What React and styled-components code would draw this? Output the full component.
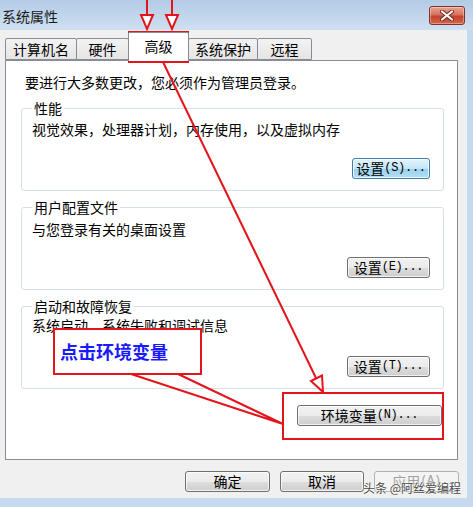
import React from 'react'
import styled, { createGlobalStyle } from 'styled-components'

const Global = createGlobalStyle`
    body {
        margin: 0;
        font-family: "Noto Sans CJK SC", "Noto Sans", sans-serif;
        color: #000;
    }
`

const Window = styled.div`
    position: relative;
    width: 473px;
    height: 507px;
    overflow: hidden;
    display: flex;
    flex-direction: column;
    background: #c6daef;
`
const TitleBar = styled.div`
    height: 30px;
    flex: none;
    display: flex;
    align-items: flex-start;
    justify-content: space-between;
    padding: 0 8px 0 2px;
    background: linear-gradient(#b3cbe5, #cfe0f1);
`
const Title = styled.div`
    font-size: 14px;
    line-height: 32px;
    color: #1a1a1a;
`
const CloseButton = styled.div`
    margin-top: 6px;
    width: 36px;
    height: 19px;
    box-sizing: border-box;
    border: 1px solid #7e3428;
    border-radius: 3px;
    background: linear-gradient(#e9a593 0%, #d9725c 45%, #c5432b 55%, #d2664c 100%);
    display: flex;
    align-items: center;
    justify-content: center;
    box-shadow: inset 0 0 0 1px rgba(255,255,255,0.35);
`
const Frame = styled.div`
    display: flex;
    height: 468px;
    flex: none;
`
const Client = styled.div`
    width: 467px;
    background: #f0f0f0;
    padding-left: 5px;
    box-sizing: border-box;
    display: flex;
    flex-direction: column;
`
const TabStrip = styled.div`
    height: 30px;
    display: flex;
    align-items: flex-end;
    position: relative;
    z-index: 1;
`
const Tab = styled.div`
    width: ${p => p.$w}px;
    height: ${p => p.$active ? 29 : 22}px;
    margin-bottom: ${p => p.$active ? -1 : 0}px;
    box-sizing: border-box;
    border: 1px solid #898c95;
    border-bottom: ${p => p.$active ? 'none' : '1px solid #898c95'};
    border-radius: 2px 2px 0 0;
    margin-right: -1px;
    background: ${p => p.$active ? '#fff' : 'linear-gradient(#f3f3f3, #e5e5e5)'};
    font-size: 14px;
    line-height: ${p => p.$active ? 26 : 20}px;
    text-align: center;
`
const Panel = styled.div`
    width: 453px;
    height: 400px;
    box-sizing: border-box;
    border: 1px solid #898c95;
    background: #fff;
    padding-top: 11px;
    display: flex;
    flex-direction: column;
`
const Intro = styled.div`
    font-size: 14px;
    line-height: 20px;
    padding-left: 19px;
`
const Group = styled.fieldset`
    margin: ${p => p.$top}px 13px 0 15px;
    padding: 0 13px 11px 10px;
    border: 1px solid #d5dfe5;
    border-radius: 3px;
    display: flex;
    flex-direction: column;
    min-inline-size: 0;
`
const Legend = styled.legend`
    font-size: 14px;
    line-height: 20px;
    padding: 0 2px;
    margin-left: 0;
`
const Desc = styled.div`
    font-size: 14px;
    line-height: 20px;
    margin-top: ${p => p.$top}px;
`
const ButtonRow = styled.div`
    display: flex;
    justify-content: flex-end;
    gap: ${p => p.$gap || 0}px;
    margin-top: ${p => p.$top}px;
    padding-right: ${p => p.$right || 0}px;
`
const Button = styled.div`
    width: ${p => p.$w}px;
    height: 21px;
    box-sizing: border-box;
    border: 1px solid ${p => p.$focus ? '#3c7fb1' : p.$disabled ? '#adb2b5' : '#707070'};
    border-radius: 3px;
    background: ${p => p.$focus
        ? 'linear-gradient(#e5f4fc 0%, #c4e5f6 50%, #98d1ef 51%, #b7dff3 100%)'
        : p.$disabled
        ? '#f4f4f4'
        : 'linear-gradient(#f2f2f2 0%, #ebebeb 50%, #dddddd 51%, #cfcfcf 100%)'};
    box-shadow: inset 0 0 0 1px ${p => p.$disabled ? 'transparent' : 'rgba(255,255,255,0.7)'};
    color: ${p => p.$disabled ? '#a0a0a0' : '#000'};
    font-size: 14px;
    line-height: 19px;
    display: flex;
    justify-content: center;
    align-items: center;
    white-space: nowrap;
`
const Accel = styled.span`
    font-family: "Liberation Mono", monospace;
    font-size: 12px;
    letter-spacing: -0.3px;
`
const Footer = styled.div`
    display: flex;
    justify-content: flex-end;
    gap: 10px;
    margin-top: 11px;
    padding-right: 8px;
`
const SideStrip = styled.div`
    flex: 1;
    background: #c6daef;
`
const Overlay = styled.svg`
    position: absolute;
    left: 0;
    top: 0;
    pointer-events: none;
`
const Callout = styled.div`
    position: absolute;
    left: 53px;
    top: 328px;
    width: 149px;
    height: 47px;
    box-sizing: border-box;
    border: 2px solid #e3151b;
    background: #fff;
    color: #1a1aff;
    font-size: 18px;
    font-weight: 700;
    line-height: 43px;
    padding-left: 5px;
`
const Watermark = styled.div`
    position: absolute;
    left: 363px;
    top: 479px;
    font-size: 12px;
    line-height: 18px;
    color: #4a4a4a;
    text-shadow: 0 0 2px #fff, 0 0 2px #fff;
    white-space: nowrap;
`

const tabs = [
    { label: '计算机名', w: 72 },
    { label: '硬件', w: 53 },
    { label: '高级', w: 61, active: true },
    { label: '系统保护', w: 70 },
    { label: '远程', w: 55 },
]

const groups = [
    { legend: '性能', desc: '视觉效果，处理器计划，内存使用，以及虚拟内存', key: 'S', top: 6, descTop: 1, btnTop: 19, focus: true },
    { legend: '用户配置文件', desc: '与您登录有关的桌面设置', key: 'E', top: 6, descTop: 2, btnTop: 18 },
    { legend: '启动和故障恢复', desc: '系统启动、系统失败和调试信息', key: 'T', top: 6, descTop: -1, btnTop: 21 },
]

const App = () => {
  return (
    <Window>
        <Global />
        <TitleBar>
            <Title>系统属性</Title>
            <CloseButton>
                <svg width="14" height="11" viewBox="0 0 14 11">
                    <path d="M2 1.5 L12 9.5 M12 1.5 L2 9.5" stroke="#6b2a20" strokeWidth="4" strokeLinecap="round" />
                    <path d="M2 1.5 L12 9.5 M12 1.5 L2 9.5" stroke="#fff" strokeWidth="2.2" strokeLinecap="round" />
                </svg>
            </CloseButton>
        </TitleBar>
        <Frame>
            <Client>
                <TabStrip>
                    {tabs.map(t => (
                        <Tab key={t.label} $w={t.w} $active={t.active}>{t.label}</Tab>
                    ))}
                </TabStrip>
                <Panel>
                    <Intro>要进行大多数更改，您必须作为管理员登录。</Intro>
                    {groups.map(g => (
                        <Group key={g.legend} $top={g.top}>
                            <Legend>{g.legend}</Legend>
                            <Desc $top={g.descTop}>{g.desc}</Desc>
                            <ButtonRow $top={g.btnTop}>
                                <Button $w={g.focus ? 78 : 83} $focus={g.focus}>
                                    设置<Accel>({g.key})...</Accel>
                                </Button>
                            </ButtonRow>
                        </Group>
                    ))}
                    <ButtonRow $top={16} $right={15}>
                        <Button $w={145}>环境变量<Accel>(N)...</Accel></Button>
                    </ButtonRow>
                </Panel>
                <Footer>
                    <Button $w={85}>确定</Button>
                    <Button $w={84}>取消</Button>
                    <Button $w={85} $disabled>应用<Accel>(A)</Accel></Button>
                </Footer>
            </Client>
            <SideStrip />
        </Frame>

        <Overlay width="473" height="507" viewBox="0 0 473 507">
            <g stroke="#e3151b" strokeWidth="2" fill="none">
                <line x1="147" y1="0" x2="147" y2="15" />
                <polygon points="141,15 153,15 147,29" fill="#fff" />
                <line x1="172" y1="0" x2="172" y2="15" />
                <polygon points="166,15 178,15 172,29" fill="#fff" />
                <rect x="129" y="32" width="59" height="30" />
                <line x1="163" y1="62" x2="316" y2="378" />
                <polygon points="322,375.5 311,381 323,392" fill="#fff" />
                <rect x="283" y="393" width="160" height="46" />
                <polyline points="131,374 283,424 178,374" />
            </g>
        </Overlay>
        <Callout>点击环境变量</Callout>
        <Watermark>头条 @阿丝爱编程</Watermark>
    </Window>
  )
}

export default App
